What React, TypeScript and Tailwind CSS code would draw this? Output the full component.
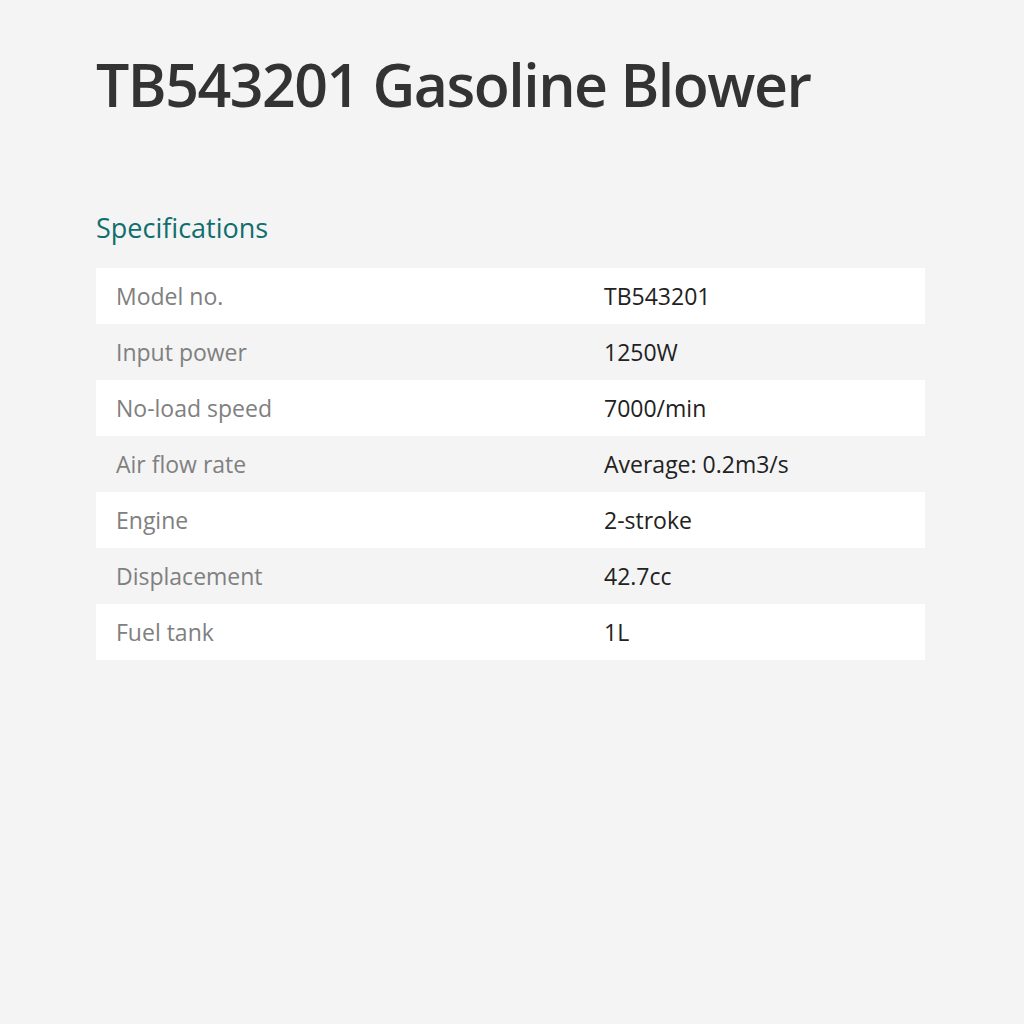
const specs = [
  { label: 'Model no.', value: 'TB543201' },
  { label: 'Input power', value: '1250W' },
  { label: 'No-load speed', value: '7000/min' },
  { label: 'Air flow rate', value: 'Average: 0.2m3/s' },
  { label: 'Engine', value: '2-stroke' },
  { label: 'Displacement', value: '42.7cc' },
  { label: 'Fuel tank', value: '1L' },
];

export default function App() {
  return (
    <div className="min-h-screen w-[1024px] h-[1024px] bg-[#f4f4f4] font-['Open_Sans',sans-serif]">
      <div className="pl-[96px] pr-[99px] pt-[46px]">
        <h1 className="text-[59px] leading-[76px] font-semibold tracking-[-1.5px] text-[#333333] font-['Open_Sans',sans-serif] [font-stretch:92%]">
          TB543201 Gasoline Blower
        </h1>
        <h2 className="mt-[88px] text-[27px] leading-[36px] text-[#0f6e6e]">Specifications</h2>
        <div className="mt-[22px]">
          {specs.map((s, i) => (
            <div
              key={s.label}
              className={`flex h-[56px] items-center text-[23px] ${i % 2 === 0 ? 'bg-white' : 'bg-[#f4f4f4]'}`}
            >
              <div className="w-[508px] pl-[20px] text-[#808080]">{s.label}</div>
              <div className="text-[#222222]">{s.value}</div>
            </div>
          ))}
        </div>
      </div>
    </div>
  );
}
